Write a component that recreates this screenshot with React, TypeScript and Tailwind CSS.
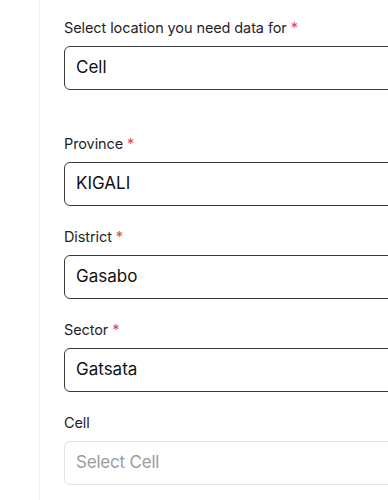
const fields = [
  { label: "Province", required: true, value: "KIGALI" },
  { label: "District", required: true, value: "Gasabo" },
  { label: "Sector", required: true, value: "Gatsata" },
  { label: "Cell", required: false, value: "", placeholder: "Select Cell" },
]

function Field({
  label,
  required,
  value,
  placeholder,
}: {
  label: string
  required: boolean
  value: string
  placeholder?: string
}) {
  return (
    <div className="flex flex-col">
      <label className="h-5 mb-2 text-[14.5px] leading-5 text-[#1f2328] tracking-[-0.1px]">
        {label}
        {required && <span className="ml-1 text-[#e5484d]">*</span>}
      </label>
      {value ? (
        <div className="h-11 w-[340px] rounded-md border border-[#3a3a3a] px-[11px] flex items-center text-[17px] text-[#111]">
          {value}
        </div>
      ) : (
        <div className="h-11 w-[340px] rounded-md border border-[#e2e4e8] px-[11px] flex items-center text-[17px] text-[#9a9ca1] tracking-[-0.2px]">
          {placeholder}
        </div>
      )}
    </div>
  )
}

export default function App() {
  return (
    <div className="min-h-screen w-full bg-white flex font-['Inter',sans-serif] overflow-hidden">
      <div className="w-10 shrink-0 border-r border-[#f0f1f3]" />
      <div className="flex-1 pl-6 pt-[18px] overflow-hidden">
        <Field
          label="Select location you need data for"
          required={true}
          value="Cell"
        />
        <div className="mt-[44px] flex flex-col gap-[21px]">
          {fields.map((f) => (
            <Field key={f.label} {...f} />
          ))}
        </div>
      </div>
    </div>
  )
}
